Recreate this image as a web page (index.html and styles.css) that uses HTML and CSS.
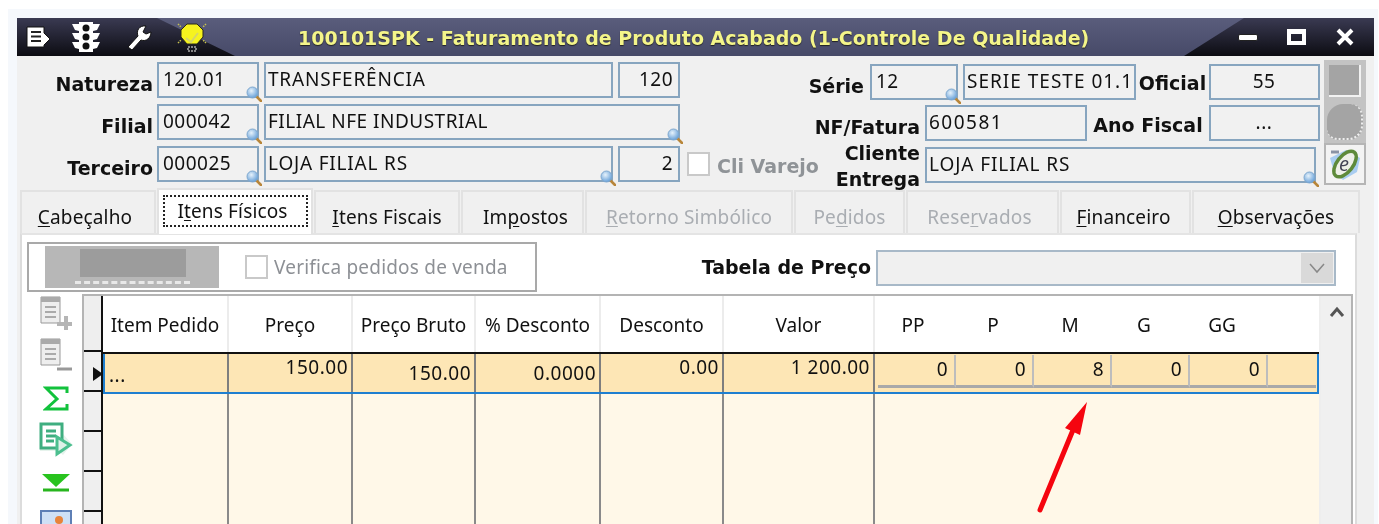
FILE: index.html
```html
<!DOCTYPE html>
<html lang="pt">
<head>
<meta charset="utf-8">
<title>Faturamento de Produto Acabado</title>
<link rel="stylesheet" href="styles.css">
</head>
<body>
<svg class="defs" width="0" height="0" aria-hidden="true">
  <defs>
    <radialGradient id="lensfill" cx="40%" cy="35%" r="70%"><stop offset="0" stop-color="#e6f2fb"/><stop offset="1" stop-color="#5f9bd6"/></radialGradient>
    <symbol id="lens" viewBox="0 0 16 16">
      <path d="M10 10l5 5" stroke="#b8863a" stroke-width="2.6" stroke-linecap="round"/>
      <circle cx="6.5" cy="6.5" r="5.5" fill="url(#lensfill)" stroke="#7fa8cf"/>
    </symbol>
  </defs>
</svg>
<div class="window">
  <div class="inner">
    <header class="titlebar">
      <div class="tools">
        <svg class="tool t1" viewBox="0 0 26 24"><path d="M2 2h17v6l6 6-6 6v2H2z" fill="#fff" stroke="#111"/><path d="M6 7h10M6 11.500h10M6 16h10" stroke="#222" stroke-width="2"/></svg>
        <svg class="tool t2" viewBox="0 0 30 32"><path d="M8 1h14v30H8zM8 3H1l3 6 4 1zM22 3h7l-3 6-4 1zM8 12H1l3 6 4 1zM22 12h7l-3 6-4 1zM8 21H1l3 6 4 1zM22 21h7l-3 6-4 1z" fill="#fff"/><circle cx="15" cy="7" r="3.500" fill="#111"/><circle cx="15" cy="16" r="3.500" fill="#111"/><circle cx="15" cy="25" r="3.500" fill="#111"/></svg>
        <svg class="tool t3" viewBox="0 0 28 28"><path d="M3 24L13 13c-2-5 1-11 8-10l-3 6 3 2 5-2c0 6-5 10-10 8L7 27z" fill="#fff" stroke="#111"/></svg>
        <svg class="tool t4" viewBox="0 0 30 32"><path d="M10 3h10l6 6v7l-6 7H10l-6-7V9z" fill="#f6f31e" stroke="#2a2a1a"/><path d="M9 17l5 4 7-9" stroke="#d5d56a" stroke-width="2" fill="none"/><path d="M11 26h8v4h-8z" fill="none" stroke="#aaa" stroke-width="1.500" stroke-dasharray="2 1"/><path d="M1 3l3 3M29 3l-3 3M1 22l3-3M29 22l-3-3" stroke="#c8c350" stroke-width="1.500" stroke-dasharray="1.500 1"/></svg>
      </div>
      <h1 class="wintitle">100101SPK - Faturamento de Produto Acabado (1-Controle De Qualidade)</h1>
      <div class="wincontrols">
        <span class="btn-min"></span>
        <span class="btn-max"></span>
        <svg class="btn-close" viewBox="0 0 20 18"><path d="M3 2l14 14M17 2L3 16" stroke="#fff" stroke-width="4"/></svg>
      </div>
    </header>

    <section class="form">
      <div class="form-left">
        <div class="frow">
          <label class="lab lab-l">Natureza</label>
          <div class="field code"><span>120.01</span><svg class="lens"><use href="#lens"/></svg></div>
          <div class="field desc"><span>TRANSFERÊNCIA</span></div>
          <div class="field num"><span>120</span></div>
        </div>
        <div class="frow">
          <label class="lab lab-l">Filial</label>
          <div class="field code"><span>000042</span><svg class="lens"><use href="#lens"/></svg></div>
          <div class="field desc-long"><span>FILIAL NFE INDUSTRIAL</span><svg class="lens"><use href="#lens"/></svg></div>
        </div>
        <div class="frow">
          <label class="lab lab-l">Terceiro</label>
          <div class="field code"><span>000025</span><svg class="lens"><use href="#lens"/></svg></div>
          <div class="field desc"><span>LOJA FILIAL RS</span><svg class="lens"><use href="#lens"/></svg></div>
          <div class="field num"><span>2</span></div>
          <span class="check check-top"></span>
          <span class="lab lab-off">Cli Varejo</span>
        </div>
      </div>
      <div class="form-right">
        <div class="frow">
          <label class="lab lab-serie">Série</label>
          <div class="field serie"><span>12</span><svg class="lens"><use href="#lens"/></svg></div>
          <div class="field seriedesc"><span>SERIE TESTE 01.1</span></div>
          <label class="lab lab-of">Oficial</label>
          <div class="field side"><span>55</span></div>
          <div class="iconbtn"><span class="gray-square"></span></div>
        </div>
        <div class="frow">
          <label class="lab lab-nf">NF/Fatura</label>
          <div class="field nf"><span>600581</span></div>
          <label class="lab lab-ano">Ano Fiscal</label>
          <div class="field side"><span>...</span></div>
          <div class="iconbtn"><span class="gray-blob"></span></div>
        </div>
        <div class="frow">
          <label class="lab lab-nf lab-two">Cliente Entrega</label>
          <div class="field client"><span>LOJA FILIAL RS</span><svg class="lens"><use href="#lens"/></svg></div>
          <div class="iconbtn light">
            <svg class="nfe" viewBox="0 0 36 36"><path d="M3 12l16-8 14 8-3 14-14 8-9-8z" fill="#a9cdf0"/><ellipse cx="18" cy="18" rx="8" ry="15" transform="rotate(38 18 18)" fill="#eef0e8" stroke="#5e8a3a" stroke-width="3.500"/><path d="M4 6h8" stroke="#8a93a5" stroke-width="3"/><text x="12" y="25" class="nfe-e">e</text></svg>
          </div>
        </div>
      </div>
    </section>

    <nav class="tabs">
      <span class="tab w1"><u>C</u>abeçalho</span>
      <span class="tab w2 active"><span class="focus">I<u>t</u>ens Físicos</span></span>
      <span class="tab w3"><u>I</u>tens Fiscais</span>
      <span class="tab w4">Im<u>p</u>ostos</span>
      <span class="tab w5 off"><u>R</u>etorno Simbólico</span>
      <span class="tab w6 off">Pe<u>d</u>idos</span>
      <span class="tab w7 off">Rese<u>r</u>vados</span>
      <span class="tab w8"><u>F</u>inanceiro</span>
      <span class="tab w9"><u>O</u>bservações</span>
    </nav>

    <main class="panel">
      <div class="filters">
        <div class="filterbox">
          <div class="graybtn"><span class="graybtn-top"></span><span class="graybtn-dots"></span></div>
          <span class="check"></span>
          <span class="filter-text">Verifica pedidos de venda</span>
        </div>
        <div class="pricebox">
          <span class="lab">Tabela de Preço</span>
          <div class="select"><span class="select-btn"><svg viewBox="0 0 20 12" class="chev"><path d="M3 2l7 8 7-8" fill="none" stroke="#888" stroke-width="1.5"/></svg></span></div>
        </div>
      </div>

      <div class="work">
        <aside class="side-tools">
          <svg class="st s1" viewBox="0 0 36 36"><path d="M3 1h19v26H3z" fill="#eee" stroke="#999"/><path d="M3 1h19v5H3z" fill="#aaa"/><path d="M7 11h11M7 16h11M7 21h11" stroke="#aaa" stroke-width="2"/><path d="M28 20v14M19 28h15" stroke="#b5b5b5" stroke-width="4"/></svg>
          <svg class="st s2" viewBox="0 0 36 36"><path d="M3 1h19v26H3z" fill="#eee" stroke="#999"/><path d="M3 1h19v5H3z" fill="#aaa"/><path d="M7 11h11M7 16h11M7 21h11" stroke="#aaa" stroke-width="2"/><path d="M19 31h15" stroke="#999" stroke-width="3"/></svg>
          <svg class="st s3" viewBox="0 0 26 26"><path d="M24 7V2H3l11 11L3 23h21v-5" fill="none" stroke="#12c23c" stroke-width="3"/></svg>
          <svg class="st s4" viewBox="0 0 36 36"><path d="M2 1h23v11l9 10-9 11-5-4H2z" fill="#e6f3ec"/><path d="M3 2h21v24H3z" fill="#fff" stroke="#3fae80" stroke-width="3"/><path d="M8 9h10M8 14h10M8 19h8" stroke="#3fae80" stroke-width="3"/><path d="M19 15l13 8-13 9z" fill="#dff1e8" stroke="#4cbf8f" stroke-width="3"/></svg>
          <svg class="st s5" viewBox="0 0 30 20"><path d="M1 1h28L15 14z" fill="#28c31e"/><path d="M2 17h26" stroke="#28b51e" stroke-width="3"/></svg>
          <svg class="st s6" viewBox="0 0 32 32"><path d="M1 1h30v31H1z" fill="#cfe0f5" stroke="#5e7fb5" stroke-width="2"/><circle cx="19" cy="10" r="4" fill="#e8833a"/><path d="M5 30c2-10 6-12 10-9l7 9z" fill="#3c68ab"/></svg>
        </aside>

        <div class="gridbox">
          <div class="grid">
            <div class="gutter">
              <div class="g-head"></div>
              <div class="g-cell g-cur"><span class="pointer"></span></div>
              <div class="g-cell"></div>
              <div class="g-cell"></div>
              <div class="g-cell"></div>
            </div>
            <div class="gmain">
              <div class="ghead">
                <div class="hc c1">Item Pedido</div>
                <div class="hc c2">Preço</div>
                <div class="hc c3">Preço Bruto</div>
                <div class="hc c4">% Desconto</div>
                <div class="hc c5">Desconto</div>
                <div class="hc c6">Valor</div>
                <div class="hc c7 sizes">
                  <span class="sz">PP</span><span class="sz">P</span><span class="sz">M</span><span class="sz">G</span><span class="sz">GG</span>
                </div>
              </div>
              <div class="grow">
                <div class="dc c1 left">...</div>
                <div class="dc c2 up">150.00</div>
                <div class="dc c3">150.00</div>
                <div class="dc c4">0.0000</div>
                <div class="dc c5 up">0.00</div>
                <div class="dc c6 up">1 200.00</div>
                <div class="dc c7 qty">
                  <span class="q">0</span><span class="q">0</span><span class="q">8</span><span class="q">0</span><span class="q">0</span><span class="q q-end"></span>
                </div>
              </div>
              <div class="gempty">
                <div class="ec c1"></div><div class="ec c2"></div><div class="ec c3"></div><div class="ec c4"></div><div class="ec c5"></div><div class="ec c6"></div><div class="ec c7"></div>
              </div>
            </div>
            <div class="scroll"><svg class="sc-up" viewBox="0 0 16 12"><path d="M2 10l6-7 6 7" fill="none" stroke="#555" stroke-width="3"/></svg></div>
          </div>
          <svg class="arrow" viewBox="0 0 60 120"><path d="M5 112L38 32" stroke="#f5050f" stroke-width="5" stroke-linecap="round"/><path d="M52 4L30 30l15 7z" fill="#f5050f"/></svg>
        </div>
      </div>
    </main>
  </div>
</div>
</body>
</html>
```

FILE: styles.css
```css
* { box-sizing: border-box; }
html, body { margin: 0; height: 524px; overflow: hidden; background: #fff; }
body { font-family: "Noto Sans", Tahoma, sans-serif; font-size: 19px; color: #111; }
.defs { position: absolute; }
.window { margin: 9px 1px 0 8px; height: 515px; background: #f5f8fc; padding: 9px 4px 0 9px; filter: blur(0.45px); }
.inner { height: 506px; background: #f0f0f0; }

.titlebar {
  position: relative; height: 38px; display: flex; align-items: center; overflow: hidden;
  background: linear-gradient(#5a5d7c, #474a68);
}
.titlebar::before {
  content: ""; position: absolute; left: 0; top: 0; bottom: 0; width: 218px;
  background: linear-gradient(#3a3a52, #0c0c12);
  clip-path: polygon(0 0, 140px 0, 100% 100%, 0 100%);
}
.titlebar::after {
  content: ""; position: absolute; right: 0; top: 0; bottom: 0; width: 190px;
  background: linear-gradient(#3a3a52, #0c0c12);
  clip-path: polygon(60px 0, 100% 0, 100% 100%, 0 100%);
}
.tools { position: absolute; z-index: 1; left: 8px; top: 0; height: 38px; display: flex; align-items: center; }
.tool { display: block; flex: none; }
.t1 { width: 26px; height: 24px; }
.t2 { width: 30px; height: 32px; margin-left: 20px; }
.t3 { width: 28px; height: 28px; margin-left: 24px; }
.t4 { width: 30px; height: 32px; margin-left: 24px; }
.wintitle {
  position: relative; z-index: 1; margin: 1px 0 0 281px; font-family: "DejaVu Sans", sans-serif;
  font-size: 19px; font-weight: 700; color: #f4f58a; white-space: nowrap; text-shadow: 0 1px 1px #222;
}
.wincontrols { position: absolute; z-index: 1; right: 19px; top: 0; height: 38px; display: flex; align-items: center; }
.btn-min { width: 20px; height: 7px; background: #fff; border: 1px solid #222; border-radius: 2px; margin-right: 29px; margin-top: 1px; }
.btn-max { width: 19px; height: 16px; border: 4px solid #fff; border-top-width: 5px; margin-right: 29px; }
.btn-close { width: 20px; height: 18px; }

.form { position: relative; display: flex; padding-top: 6px; height: 134px; }
.form-left { width: 783px; flex: none; }
.frow { display: flex; align-items: stretch; height: 36px; margin-bottom: 6px; }
.form-right { width: 566px; flex: none; margin-left: auto; margin-right: 8px; padding-top: 2px; }
.form-right .frow:first-child { margin-bottom: 5px; }
.lab { font-family: "DejaVu Sans", sans-serif; font-weight: 700; font-size: 19px; line-height: 24px; color: #111; white-space: nowrap; flex: none; }
.frow .lab { display: flex; align-items: center; justify-content: flex-end; padding-top: 7px; }
.lab-l { width: 136px; margin-right: 4px; }
.field {
  position: relative; border: 2px solid #87a5bf; background: #f1f1f1; display: flex; align-items: flex-start;
  padding: 3px 3px 0 2px; line-height: 25px; white-space: nowrap; flex: none; letter-spacing: 0.5px;
}
.lens { position: absolute; right: -5px; bottom: -6px; width: 16px; height: 16px; z-index: 2; }
.code { width: 102px; margin-right: 5px; padding-left: 4px; }
.desc { width: 349px; margin-right: 5px; letter-spacing: 0.8px; }
.desc-long { width: 416px; }
.num { width: 62px; justify-content: flex-end; padding-right: 5px; }
.frow .lab-off { color: #8f9397; padding-top: 3px; }
.check { display: block; flex: none; width: 23px; height: 24px; border: 2px solid #c9c9c9; background: #fff; }
.check-top { margin: 6px 7px 0 7px; }

.lab-serie { width: 64px; margin-right: 6px; }
.serie { width: 88px; margin-right: 5px; padding-left: 4px; }
.seriedesc { width: 173px; padding-left: 2px; letter-spacing: 1px; }
.frow .lab-of { width: 73px; justify-content: center; padding-top: 1px; }
.side { width: 111px; justify-content: center; margin-right: 4px; }
.lab-nf { width: 120px; margin-right: 5px; }
.nf { width: 162px; letter-spacing: 1.5px; }
.frow .lab-ano { width: 122px; justify-content: center; padding-top: 3px; }
.client { width: 391px; margin-right: 8px; letter-spacing: 0.9px; }
.frow .lab-two { white-space: normal; text-align: right; padding-top: 0; line-height: 26px; height: 52px; margin-top: -7px; }
.iconbtn { flex: none; width: 42px; height: 42px; margin-top: -4px; background: #c3c3c3; display: flex; align-items: center; justify-content: center; }
.gray-square { display: block; width: 32px; height: 32px; background: #a4a4a4; border-right: 2px solid #f2f2f2; border-bottom: 2px solid #f2f2f2; }
.gray-blob { display: block; width: 36px; height: 36px; background: #a4a4a4; border-radius: 45% 35% 40% 30%; border-right: 2px dotted #eee; border-bottom: 2px dotted #eee; }
.light { background: #f3f3f3; border: 2px solid #b5b5b5; }
.nfe { width: 36px; height: 36px; }
.nfe-e { font-family: "Open Sans", sans-serif; font-size: 20px; font-style: italic; fill: #445; }

.tabs { position: relative; z-index: 1; display: flex; height: 43px; padding-left: 3px; align-items: flex-end; }
.tab {
  height: 43px; flex: none; border: 2px solid #e2e2e2; border-bottom: 0; margin-right: 1px;
  background: #f0f0f0; text-align: center; line-height: 50px; white-space: nowrap; color: #111; letter-spacing: 0.15px;
}
.tab u { text-underline-offset: 2px; }
.tab.off { color: #a9adb2; }
.tab.active { height: 46px; background: #fff; line-height: 38px; margin-bottom: -1px; padding-top: 5px; }
.focus { display: block; margin: 0 3px 0 4px; padding-right: 6px; height: 32px; line-height: 29px; border: 2px dotted #222; }
.w1 { width: 136px; padding-right: 6px; } .w2 { width: 156px; } .w3 { width: 146px; } .w4 { width: 123px; padding-left: 6px; }
.w5 { width: 208px; } .w6 { width: 111px; } .w7 { width: 153px; padding-right: 6px; } .w8 { width: 131px; padding-right: 4px; } .w9 { width: 168px; margin-right: 0; }

.panel { margin-left: 3px; width: 1337px; background: #fff; height: 295px; border-left: 2px solid #dcdcdc; border-top: 2px solid #e4e4e4; border-right: 2px solid #dcdcdc; }
.filters { display: flex; align-items: center; padding: 7px 0 0 5px; height: 57px; }
.filterbox { width: 510px; height: 50px; border: 2px solid #a9a9a9; display: flex; align-items: center; padding-left: 16px; flex: none; }
.graybtn { position: relative; width: 174px; height: 42px; background: #b7b7b7; flex: none; margin-right: 26px; }
.graybtn-top { position: absolute; left: 35px; top: 3px; width: 106px; height: 28px; background: #9c9c9c; }
.graybtn-dots { position: absolute; left: 30px; bottom: 4px; width: 115px; height: 4px; border-bottom: 3px dashed #e8e8e8; }
.filter-text { margin-left: 6px; color: #8d9095; font-size: 19px; letter-spacing: 0.2px; }
.pricebox { display: flex; align-items: center; margin-left: auto; margin-right: 19px; }
.pricebox .lab { margin-right: 5px; }
.select { position: relative; width: 460px; height: 36px; border: 2px solid #a8b9c8; background: #f0f0f0; margin-top: 1px; }
.select-btn { position: absolute; right: 1px; top: 1px; bottom: 1px; width: 32px; background: #d9d9d9; display: flex; align-items: center; justify-content: center; }
.chev { width: 20px; height: 12px; }

.work { display: flex; height: 240px; margin-top: 2px; }
.side-tools { width: 60px; flex: none; display: flex; flex-direction: column; align-items: center; padding: 2px 0 0 8px; }
.st { display: block; flex: none; }
.s1 { width: 36px; height: 36px; }
.s2 { width: 36px; height: 36px; margin-top: 6px; }
.s3 { width: 26px; height: 26px; margin-top: 12px; }
.s4 { width: 36px; height: 36px; margin-top: 10px; }
.s5 { width: 30px; height: 20px; margin-top: 15px; }
.s6 { width: 32px; height: 32px; margin-top: 17px; }

.gridbox { position: relative; width: 1271px; flex: none; }
.grid { display: flex; height: 240px; border: 2px solid #b4b4b4; border-bottom: 0; }
.gutter { width: 19px; flex: none; background: #f0f0f0; border-right: 2px solid #111; }
.g-head { height: 56px; border-bottom: 2px solid #111; background: #eee; }
.g-cell { position: relative; height: 40px; border-bottom: 2px solid #111; background: #efefef; }
.pointer { position: absolute; right: -2px; top: 15px; width: 0; height: 0; border-left: 10px solid #111; border-top: 7px solid transparent; border-bottom: 7px solid transparent; }
.gmain { width: 1216px; flex: none; display: flex; flex-direction: column; }
.ghead { display: flex; height: 58px; border-bottom: 2px solid #111; flex: none; background: #fff; }
.c1 { width: 126px; } .c2 { width: 124px; } .c3 { width: 123px; } .c4 { width: 125px; } .c5 { width: 123px; } .c6 { width: 151px; } .c7 { width: 444px; }
.hc { flex: none; border-right: 2px solid #ececec; text-align: center; line-height: 58px; white-space: nowrap; }
.hc.c7 { border-right: 0; }
.sizes { display: flex; }
.sz { display: block; width: 78px; text-align: center; }
.sizes .sz:first-child { width: 76px; }
.sizes .sz:nth-child(2) { width: 84px; }
.sizes .sz:nth-child(3) { width: 70px; }
.grow { display: flex; height: 40px; flex: none; background: #fde6b5; border-bottom: 2px solid #1f7fd0; border-left: 2px solid #1f7fd0; border-right: 2px solid #1f7fd0; }
.dc { flex: none; border-right: 2px solid #7e7e7e; text-align: right; padding: 6px 3px 0 0; line-height: 26px; white-space: nowrap; letter-spacing: 0.5px; }
.dc.up { padding-top: 0; }
.dc.c1 { width: 124px; }
.dc.left { text-align: left; padding-left: 4px; padding-top: 8px; }
.dc.c7 { width: 442px; border-right: 0; padding: 1px 0 0 3px; display: flex; }
.qty { height: 34px; }
.q { display: block; width: 78px; height: 33px; flex: none; padding: 1px 6px 0 0; text-align: right; border-right: 2px solid #bdbdbd; border-bottom: 3px solid #a9a9a9; }
.q-end { width: 48px; border-right: 0; }
.gempty { display: flex; flex: 1; background: #fff8e8; }
.ec { flex: none; border-right: 2px solid #8a8a8a; }
.ec.c7 { border-right: 0; }
.scroll { flex: 1; background: #f0f0f0; padding: 10px 0 0 6px; border-left: 2px solid #eee; }
.sc-up { display: block; width: 16px; height: 12px; margin-left: 2px; }
.arrow { position: absolute; left: 953px; top: 104px; width: 60px; height: 120px; }
```
